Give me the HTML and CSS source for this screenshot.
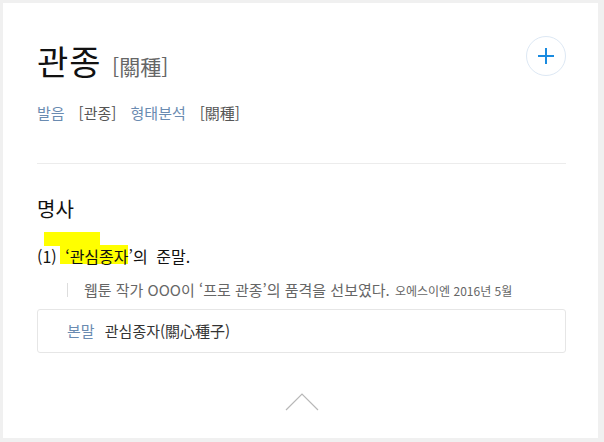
FILE: index.html
```html
<!DOCTYPE html>
<html lang="ko">
<head>
    <meta charset="UTF-8">
    <title>관종</title>
    <link rel="stylesheet" href="styles.css">
</head>
<body>
    <div class="card">
        <!-- 표제어 -->
        <div class="entry-head">
            <h1 class="word">관종 <span class="hanja">[關種]</span></h1>
            <button class="add-button" aria-label="단어장 추가">
                <svg width="16" height="16" viewBox="0 0 16 16"><path d="M8 0v16M0 8h16" stroke="#1a8be0" stroke-width="2" fill="none"/></svg>
            </button>
        </div>
        <div class="pron">
            <span class="pron-label">발음</span><span class="pron-value">[관종]</span>
            <span class="pron-label">형태분석</span><span class="pron-value">[關種]</span>
        </div>

        <hr class="divider">

        <!-- 뜻풀이 -->
        <h2 class="pos">명사</h2>
        <p class="mean">
            <span class="hl hl-top"></span>
            <span class="hl hl-bottom"></span>
            <span class="num">(1)</span> ‘관심종자’의 준말.
        </p>
        <p class="example">웹툰 작가 OOO이 ‘프로 관종’의 품격을 선보였다. <span class="source">오에스이엔 2016년 5월</span></p>

        <div class="origin">
            <span class="origin-label">본말</span> 관심종자(關心種子)
        </div>

        <div class="fold">
            <svg width="34" height="18" viewBox="0 0 34 18"><path d="M1 17L17 1l16 16" stroke="#b8b8b8" stroke-width="1.2" fill="none"/></svg>
        </div>
    </div>
</body>
</html>
```
FILE: styles.css
```css
body {
    margin: 0;
    padding: 3px 6px 4px 3px;
    background-color: #f0f0f0;
    font-family: "Noto Sans CJK KR", "Noto Sans", sans-serif;
    color: #111;
}

.card {
    position: relative;
    z-index: 0;
    background-color: #ffffff;
    height: 435px;
    padding: 0 32px 0 34px;
    box-sizing: border-box;
    overflow: hidden;
}

/* 표제어 영역 */
.entry-head {
    display: flex;
    justify-content: space-between;
    align-items: flex-start;
    padding-top: 33px;
}

.word {
    margin: 0;
    font-size: 34px;
    font-weight: 400;
    line-height: 49px;
    letter-spacing: 1px;
}

.hanja {
    font-size: 21px;
    line-height: 1;
    color: #666;
    letter-spacing: 0;
    margin-left: 0;
}

.add-button {
    width: 40px;
    height: 40px;
    border: 1px solid #dde8f4;
    border-radius: 50%;
    background: #fff;
    display: flex;
    align-items: center;
    justify-content: center;
    padding: 0;
}

.pron {
    margin-top: 18px;
    font-size: 15px;
    line-height: 20px;
}

.pron-label {
    color: #6a8bb1;
    margin-right: 14px;
}

.pron-value {
    color: #555;
    margin-right: 10px;
}

.divider {
    border: none;
    border-top: 1px solid #ececec;
    margin: 40px 0 0;
}

/* 뜻풀이 */
.pos {
    margin: 31px 0 0;
    font-size: 20px;
    font-weight: 400;
    line-height: 28px;
}

.mean {
    position: relative;
    margin: 22px 0 0;
    font-size: 16px;
    line-height: 22px;
    word-spacing: 4px;
}

.num {
    margin-right: 0;
}

/* 형광펜 표시 */
.hl {
    position: absolute;
    background-color: #ffff00;
    z-index: -1;
}

.hl-top {
    left: 7px;
    top: -13px;
    width: 56px;
    height: 14px;
}

.hl-bottom {
    left: 23px;
    top: 0;
    width: 68px;
    height: 19px;
}

.example {
    margin: 16px 0 0 30px;
    padding-left: 16px;
    border-left: 1px solid #ddd;
    font-size: 15px;
    line-height: 14px;
    color: #666;
}

.source {
    font-size: 12px;
    line-height: 1;
    margin-left: 1px;
}

.origin {
    margin-top: 12px;
    border: 1px solid #e6e6e6;
    border-radius: 3px;
    padding: 10px 29px;
    font-size: 15px;
    line-height: 22px;
    color: #333;
}

.origin-label {
    color: #6a8bb1;
    margin-right: 6px;
}

.fold {
    display: flex;
    justify-content: center;
    margin-top: 40px;
}
```
